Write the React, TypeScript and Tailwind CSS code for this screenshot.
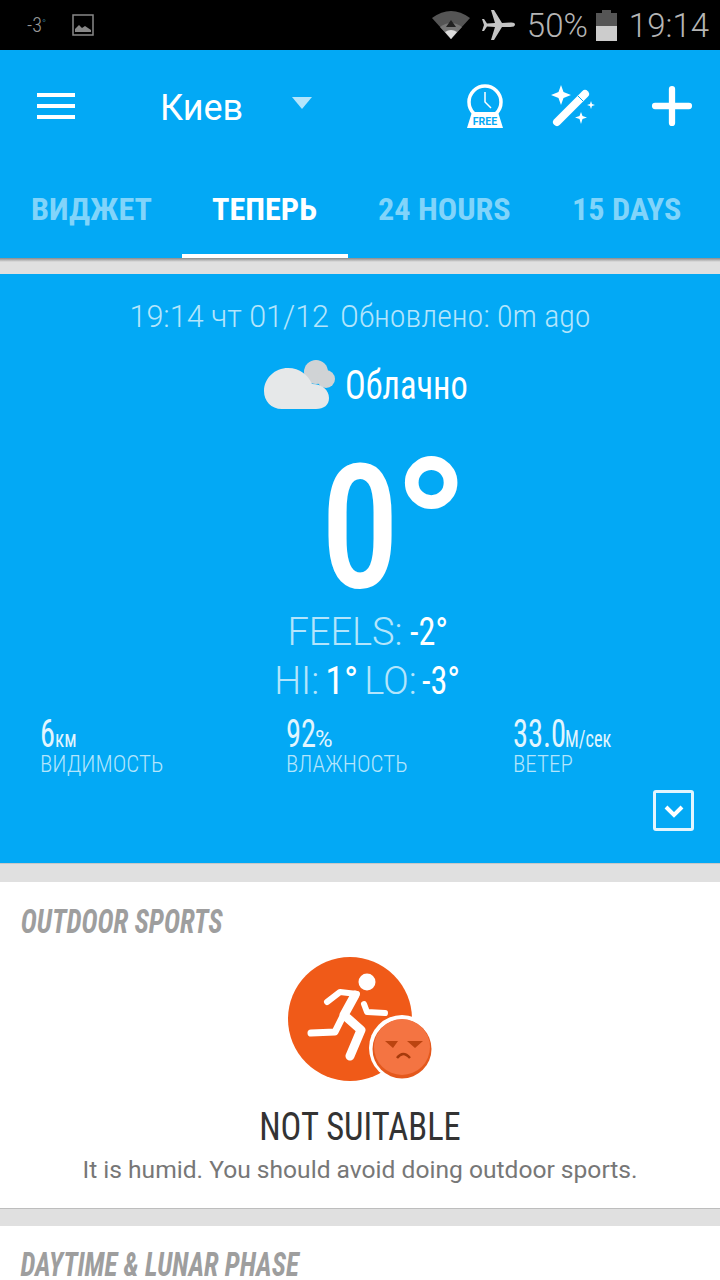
import { Plus } from 'lucide-react';

const roboto = { fontFamily: 'Roboto, sans-serif' };

function Stat({ value, unit, label, className, valueClass, unitClass }: { value: string; unit: string; label: string; className: string; valueClass: string; unitClass: string }) {
  return (
    <div className={className}>
      <div className="flex h-[40px] items-end whitespace-nowrap text-[#e1f5fe]">
        <span className={`inline-block origin-left scale-x-[0.78] text-[39px] font-normal leading-[42px] [font-stretch:75%] ${valueClass}`}>{value}</span>
        <span className={`inline-block origin-left text-[24px] font-normal leading-[32px] ${unitClass}`}>{unit}</span>
      </div>
      <div className="mt-[-3px] text-[23px] font-light leading-[26px] text-[#b3e5fc] [font-stretch:75%]">{label}</div>
    </div>
  );
}

function Cloud() {
  return (
    <svg width="72" height="52" viewBox="0 0 72 52">
      <circle cx="52" cy="13" r="12" fill="#d0d3d5" />
      <circle cx="62" cy="20" r="9" fill="#d0d3d5" />
      <path d="M18 50 C7 50 0 42 0 32 C0 19 11 9 24 9 C36 9 44 16 48 25 C58 25 65 31 65 39 C65 46 60 50 52 50 Z" fill="#e6e8e9" />
    </svg>
  );
}

function Runner() {
  return (
    <svg width="146" height="126" viewBox="0 0 146 126" className="block">
      <circle cx="62" cy="62" r="62" fill="#f05a18" />
      <circle cx="79" cy="25" r="8.500" fill="#fff" />
      <path d="M39 45 L52 35 L69 37" fill="none" stroke="#fff" strokeWidth="6" strokeLinecap="round" strokeLinejoin="round" />
      <path d="M76 47 L79 55 L97 56" fill="none" stroke="#fff" strokeWidth="6" strokeLinecap="round" strokeLinejoin="round" />
      <path d="M67 38 L56 58 L73 73 L62 99" fill="none" stroke="#fff" strokeWidth="9" strokeLinecap="round" strokeLinejoin="round" />
      <path d="M54 61 L47 75 L23 76" fill="none" stroke="#fff" strokeWidth="7" strokeLinecap="round" strokeLinejoin="round" />
      <circle cx="114" cy="91" r="33" fill="#fff" />
      <circle cx="114" cy="92" r="29.500" fill="#e4581c" />
      <circle cx="114" cy="90" r="28" fill="#f47442" />
      <path d="M97 84 L110 84 L105 91 Z M119 84 L135 84 L127 91 Z" fill="#bb4410" />
      <path d="M109 101 Q115 93 122 101" fill="none" stroke="#a63a0c" strokeWidth="2.500" />
    </svg>
  );
}

export default function App() {
  return (
    <div className="h-[1280px] w-[720px] overflow-hidden bg-[#e0e0e0]" style={roboto}>
      {/* status bar */}
      <div className="flex h-[50px] items-center bg-black pl-[27px] pr-[11px] text-[#b5b5b5]">
        <span className="text-[20px] font-light text-[#999] [font-stretch:75%]">-3<sup className="text-[11px] text-[#3a8fa8]">°</sup></span>
        <svg width="22" height="22" viewBox="0 0 22 22" className="ml-[26px]">
          <rect x="1" y="1" width="20" height="20" fill="none" stroke="#888" strokeWidth="1.500" />
          <path d="M3 18 L3 15 L7 11 L10 14 L13 12 L19 16 L19 18 Z" fill="#888" />
        </svg>
        <svg width="40" height="32" viewBox="0 0 40 32" className="ml-auto">
          <path d="M20 30 L1 9 Q20 -5 39 9 Z" fill="#555" />
          <path d="M20 30 L9 18 Q20 10 31 18 Z" fill="#777" />
          <path d="M20 30 L14 23 Q20 19 26 23 Z" fill="#ddd" />
          <path d="M20 11 L15 18 L25 18 Z" fill="#222" />
        </svg>
        <svg width="34" height="32" viewBox="0 0 34 32" className="ml-[11px]">
          <path d="M33 15.500 Q33 13 28 13.500 L20 14 L12 1 L9 1 L13 14 L5 14.500 L2 10 L0 10 L2 16 L0 22 L2 22 L5 17.500 L13 18 L9 31 L12 31 L20 18 L28 18 Q33 18 33 15.500 Z" fill="#c4c4c4" />
        </svg>
        <span className="ml-[11px] text-[33px] font-light leading-none">50%</span>
        <div className="ml-[8px] flex h-[31px] w-[21px] flex-col items-center">
          <div className="h-[3px] w-[9px] bg-[#555]" />
          <div className="h-[13px] w-full bg-[#555]" />
          <div className="h-[15px] w-full bg-[#ccc]" />
        </div>
        <span className="ml-[12px] text-[33px] font-light leading-none">19:14</span>
      </div>

      {/* header */}
      <div className="h-[208px] bg-[#03a9f5]">
        <div className="flex h-[112px] items-center pl-[37px] text-white">
          <div className="flex w-[38px] flex-col gap-[7px]">
            <div className="h-[4px] w-[38px] bg-white" />
            <div className="h-[4px] w-[38px] bg-white" />
            <div className="h-[4px] w-[38px] bg-white" />
          </div>
          <span className="ml-[85px] mt-[3px] w-[83px] text-[36px] font-normal leading-none">Киев</span>
          <div className="ml-[49px] mt-[-6px] h-0 w-0 border-x-[10px] border-t-[12px] border-x-transparent border-t-[#b3e5fc]" />
          <svg width="40" height="46" viewBox="0 0 40 46" className="ml-[153px]">
            <circle cx="20" cy="19" r="16" fill="none" stroke="#fff" strokeWidth="3.500" />
            <path d="M20 9 L20 19 L26 25" fill="none" stroke="#fff" strokeWidth="1.500" />
            <path d="M7 29 L33 29 L38 45 L2 45 Z" fill="#fff" />
            <text x="20" y="42" textAnchor="middle" fontSize="10.500" fontWeight="700" fill="#03a9f5" fontFamily="Roboto, sans-serif">FREE</text>
          </svg>
          <svg width="46" height="44" viewBox="0 0 46 44" className="ml-[46px]">
            <path d="M6 38 L34 10" stroke="#fff" strokeWidth="8" strokeLinecap="round" />
            <path d="M27 12 L32 17" stroke="#03a9f5" strokeWidth="1" />
            <path d="M10 1 L12.500 8 L20 11 L12.500 14 L10 21 L7.500 14 L0 11 L7.500 8 Z" fill="#fff" />
            <path d="M30 28 L31.500 32 L36 33.500 L31.500 35 L30 40 L28.500 35 L24 33.500 L28.500 32 Z" fill="#fff" />
            <path d="M40 17 L41 20 L44 21 L41 22 L40 25 L39 22 L36 21 L39 20 Z" fill="#fff" />
          </svg>
          <Plus className="ml-[46px]" size={58} strokeWidth={2.600} color="#fff" />
        </div>
        <div className="relative h-[96px] text-[32.200px] font-bold text-[#81d4fa] [font-stretch:75%]">
          <span className="absolute left-[31px] top-[31px] leading-none">ВИДЖЕТ</span>
          <span className="absolute left-[212px] top-[31px] leading-none text-white">ТЕПЕРЬ</span>
          <span className="absolute left-[378px] top-[31px] leading-none">24 HOURS</span>
          <span className="absolute left-[572px] top-[31px] leading-none">15 DAYS</span>
          <div className="absolute bottom-0 left-[182px] h-[4px] w-[166px] bg-white" />
        </div>
      </div>
      <div className="h-[4px] bg-gradient-to-b from-[#8a8a8a] to-[#e0e0e0]" />
      <div className="h-[12px]" />

      {/* current conditions */}
      <div className="relative h-[590px] border-b border-[#c8c8c8] bg-[#03a9f5]">
        <div className="flex items-baseline justify-center pt-[24px] text-[32px] font-light leading-[36px] text-[#b3e5fc]">
          <span className="text-[30.500px]">19:14 чт 01/12</span>
          <span className="ml-[11px] [font-stretch:85%]">Обновлено: 0m ago</span>
        </div>
        <div className="mt-[24px] flex h-[52px] items-center pl-[264px]">
          <Cloud />
          <span className="ml-[9px] mt-[1px] inline-block origin-left scale-x-[0.86] whitespace-nowrap text-[40px] leading-none text-white [font-stretch:75%]">Облачно</span>
        </div>
        <div className="relative mt-[32px] h-[170px] text-center text-[172px] font-medium leading-[170px] text-white [font-stretch:75%]">
          <span className="inline-block scale-x-[0.92]">0</span>
          <span className="absolute left-[392px] top-[5px] text-[205px] font-medium">°</span>
        </div>
        <div className="mt-[-6px] flex h-[50px] items-center justify-center pl-[16px] text-[38px] font-light text-[#b3e5fc]">
          FEELS:<span className="ml-[7px] inline-block w-[39px] origin-left scale-x-[0.9] font-normal text-white [font-stretch:75%]">-2°</span>
        </div>
        <div className="flex h-[48px] items-center justify-center pl-[14px] text-[38px] font-light text-[#b3e5fc]">
          HI:<span className="ml-[6px] mr-[11px] inline-block w-[28px] font-normal text-white [font-stretch:75%]">1°</span>LO:<span className="ml-[5px] inline-block w-[38px] origin-left scale-x-[0.9] font-normal text-white [font-stretch:75%]">-3°</span>
        </div>
        <div className="mt-[10px] flex">
          <Stat value="6" unit="км" label="ВИДИМОСТЬ" className="ml-[40px] w-[246px]" valueClass="w-[15px]" unitClass="w-[20px] scale-x-[0.8] [font-stretch:75%]" />
          <Stat value="92" unit="%" label="ВЛАЖНОСТЬ" className="w-[227px]" valueClass="w-[29px]" unitClass="w-[20px] scale-x-[1]" />
          <Stat value="33.0" unit="М/сек" label="ВЕТЕР" className="" valueClass="w-[52px]" unitClass="w-[46px] scale-x-[0.76] [font-stretch:75%]" />
        </div>
        <div className="absolute bottom-[32px] right-[26px] flex h-[41px] w-[41px] items-center justify-center rounded-[3px] border-[3px] border-[#e1f5fe]">
          <svg width="22" height="14" viewBox="0 0 22 14"><path d="M3 3 L11 11 L19 3" fill="none" stroke="#fff" strokeWidth="4" /></svg>
        </div>
      </div>
      <div className="h-[18px]" />

      {/* outdoor sports */}
      <div className="h-[327px] border-b border-[#bdbdbd] bg-white">
        <div className="origin-left scale-x-[0.83] whitespace-nowrap pl-[25px] pt-[22px] text-[33px] font-bold italic leading-[36px] text-[#9e9e9e] [font-stretch:75%]">OUTDOOR SPORTS</div>
        <div className="mt-[17px] flex justify-center pl-[1px]"><Runner /></div>
        <div className="mt-[22px] origin-center scale-x-[0.91] text-center text-[38px] leading-[44px] text-[#333] [font-stretch:75%]">NOT SUITABLE</div>
        <div className="mt-[6px] text-center text-[24.600px] leading-[30px] text-[#777]">It is humid. You should avoid doing outdoor sports.</div>
      </div>
      <div className="h-[17px]" />

      <div className="h-[60px] bg-white">
        <div className="origin-left scale-x-[0.82] whitespace-nowrap pl-[25px] pt-[21px] text-[33px] font-bold italic leading-[36px] text-[#9e9e9e] [font-stretch:75%]">DAYTIME &amp; LUNAR PHASE</div>
      </div>
    </div>
  );
}
